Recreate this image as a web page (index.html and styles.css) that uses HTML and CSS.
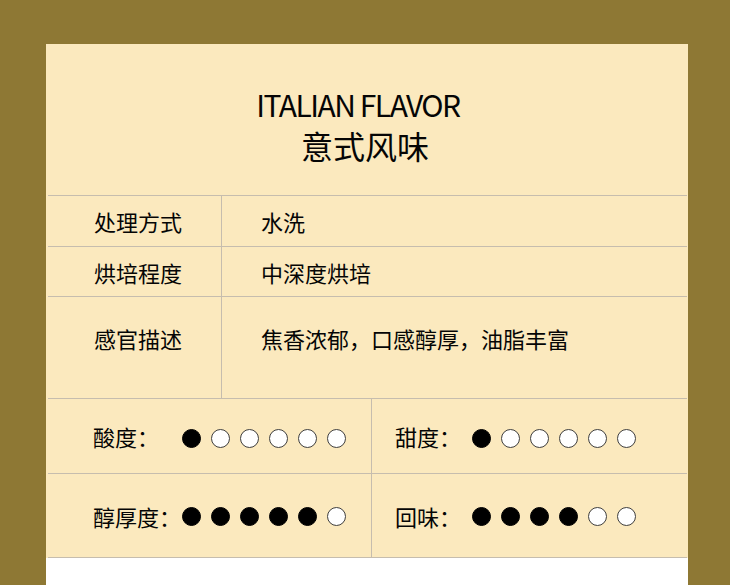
FILE: index.html
```html
<!DOCTYPE html>
<html lang="zh-CN">
<head>
<meta charset="utf-8">
<title>意式风味</title>
<link rel="stylesheet" href="styles.css">
</head>
<body>
<div class="card">
  <header class="head">
    <div class="en">ITALIAN FLAVOR</div>
    <div class="zh">意式风味</div>
  </header>
  <div class="table">
    <div class="row r1">
      <div class="key">处理方式</div>
      <div class="val">水洗</div>
    </div>
    <div class="row r2">
      <div class="key">烘培程度</div>
      <div class="val">中深度烘培</div>
    </div>
    <div class="row r3">
      <div class="key">感官描述</div>
      <div class="val">焦香浓郁，口感醇厚，油脂丰富</div>
    </div>
    <div class="srow r4">
      <div class="score left">
        <span class="lbl">酸度：</span>
        <span class="dots"><i class="on"></i><i></i><i></i><i></i><i></i><i></i></span>
      </div>
      <div class="score right">
        <span class="lbl">甜度：</span>
        <span class="dots"><i class="on"></i><i></i><i></i><i></i><i></i><i></i></span>
      </div>
    </div>
    <div class="srow r5">
      <div class="score left">
        <span class="lbl">醇厚度：</span>
        <span class="dots"><i class="on"></i><i class="on"></i><i class="on"></i><i class="on"></i><i class="on"></i><i></i></span>
      </div>
      <div class="score right">
        <span class="lbl">回味：</span>
        <span class="dots"><i class="on"></i><i class="on"></i><i class="on"></i><i class="on"></i><i></i><i></i></span>
      </div>
    </div>
  </div>
  <div class="foot"></div>
</div>
</body>
</html>
```

FILE: styles.css
```css
html, body {
  margin: 0;
  padding: 0;
}
body {
  background: #8e7834;
  font-family: "Noto Sans CJK SC", "Noto Sans", sans-serif;
  font-weight: 400;
  color: #050505;
  height: 585px;
  overflow: hidden;
}
.card {
  margin: 44px 0 0 46px;
  width: 642px;
  background: #fbe9be;
}
.head {
  height: 151px;
  display: flex;
  flex-direction: column;
  align-items: center;
  box-sizing: border-box;
  padding-top: 45px;
  padding-right: 18px;
}
.en {
  font-size: 30px;
  line-height: 30px;
  letter-spacing: -1.5px;
}
.zh {
  font-size: 32px;
  line-height: 34px;
  margin-top: 9px;
  padding-left: 14px;
}
.table {
  margin: 0 1px 0 2px;
  border-bottom: 1px solid #c6bdae;
}
.row {
  display: grid;
  grid-template-columns: 174px 1fr;
  border-top: 1px solid #c6bdae;
  font-size: 22px;
}
.key {
  border-right: 1px solid #c6bdae;
  padding-left: 46px;
  display: flex;
  align-items: center;
}
.val {
  padding-left: 39px;
  display: flex;
  align-items: center;
}
.r1 { height: 50px; }
.r2 { height: 49px; }
.r3 { height: 101px; }
.r3 .key, .r3 .val { padding-bottom: 19px; }
.srow {
  display: grid;
  grid-template-columns: 324px 1fr;
  border-top: 1px solid #c6bdae;
  font-size: 22px;
}
.r4 { height: 74px; }
.r5 { height: 83px; }
.score {
  display: flex;
  align-items: center;
}
.left {
  border-right: 1px solid #c6bdae;
  padding-left: 45px;
}
.left .lbl { width: 89px; }
.right {
  padding-left: 23px;
}
.right .lbl { width: 77px; }
.lbl {
  flex: none;
  white-space: nowrap;
}
.dots {
  display: flex;
  gap: 10px;
}
.dots i {
  width: 19px;
  height: 19px;
  box-sizing: border-box;
  border-radius: 50%;
  border: 1.5px solid #3f3f3f;
  background: #fff;
  display: block;
}
.dots i.on {
  background: #000;
  border-color: #000;
}
.r4 .dots { margin-top: 4px; }
.r5 .dots { margin-top: 2px; }
.foot {
  height: 40px;
  background: #fff;
}
```
